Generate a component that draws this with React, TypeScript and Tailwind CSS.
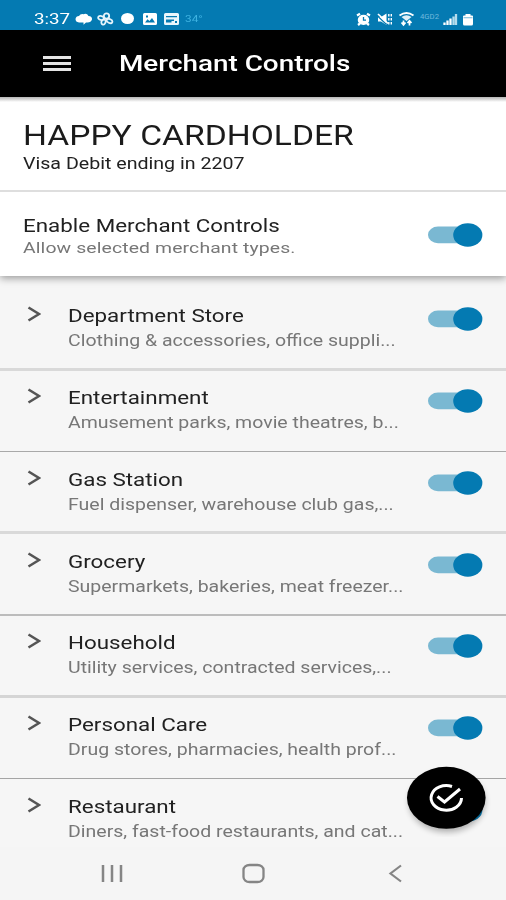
import React from "react";

const rows = [
  { name: "Department Store", detail: "Clothing & accessories, office suppli...", line: "border-b-[3px] border-[#d9d9d9] h-[95px] pt-[27px]" },
  { name: "Entertainment", detail: "Amusement parks, movie theatres, b...", line: "border-b border-[#a9a9a9] h-[81px] pt-[14px]" },
  { name: "Gas Station", detail: "Fuel dispenser, warehouse club gas,...", line: "border-b-[3px] border-[#d9d9d9] h-[82px] pt-[15px]" },
  { name: "Grocery", detail: "Supermarkets, bakeries, meat freezer...", line: "border-b-2 border-[#bcbcbc] h-[82px] pt-[15px]" },
  { name: "Household", detail: "Utility services, contracted services,...", line: "border-b-[3px] border-[#d5d5d5] h-[82px] pt-[14px]" },
  { name: "Personal Care", detail: "Drug stores, pharmacies, health prof...", line: "border-b border-[#a5a5a5] h-[81px] pt-[14px]" },
  { name: "Restaurant", detail: "Diners, fast-food restaurants, and cat...", line: "h-[68px] pt-[15px]" },
];

function Wide({ className, children }: { className: string; children: React.ReactNode }) {
  return <div className={"w-max origin-left scale-x-[1.25] whitespace-nowrap " + className}>{children}</div>;
}

function Toggle() {
  return (
    <svg className="h-6 w-[56px] shrink-0" viewBox="0 0 56 24" aria-hidden="true">
      <rect x="1" y="3.6" width="46" height="16.6" rx="10" ry="8.3" fill="#7ab8d2" />
      <ellipse cx="40.8" cy="12" rx="14.6" ry="11.8" fill="#047ab2" />
    </svg>
  );
}

function StatusIcons() {
  return (
    <div className="flex items-center text-white">
      <svg className="h-[14px] w-[18px]" viewBox="0 0 18 14">
        <path d="M4 4Q5.500 1.500 8.500 2.200Q12 1 13.500 4Q17.300 4.300 17 7.500Q16 10.500 12.500 10.500H11L8.500 12.800V10.500H4Q.500 10 .500 7Q1 4 4 4Z" fill="#fff" />
      </svg>
      <svg className="ml-[4px] h-[14px] w-[17px]" viewBox="0 0 17 14" fill="none" stroke="#e6f4fb" strokeWidth="1.8">
        <ellipse cx="9.500" cy="4" rx="2.700" ry="2.700" />
        <ellipse cx="4" cy="6" rx="2.900" ry="2" transform="rotate(12 4 6)" />
        <ellipse cx="6.500" cy="10" rx="2" ry="2.600" transform="rotate(25 6.500 10)" />
        <ellipse cx="12.500" cy="9" rx="3" ry="1.900" transform="rotate(25 12.500 9)" />
      </svg>
      <div className="ml-[7px] h-[11px] w-[13px] rounded-[50%] bg-white" />
      <svg className="ml-[9px] h-[12px] w-[14px]" viewBox="0 0 14 12">
        <path fillRule="evenodd" d="M1.500 0H12.500Q14 0 14 1.500V10.500Q14 12 12.500 12H1.500Q0 12 0 10.500V1.500Q0 0 1.500 0ZM2 9.500H12L9 5L6.500 8L4.500 6.300ZM3 2.500V4.500H5V2.500Z" fill="#fff" />
      </svg>
      <svg className="ml-[7px] h-[12px] w-[15px]" viewBox="0 0 15 12">
        <path fillRule="evenodd" d="M1.500 0H13.500Q15 0 15 1.500V10.500Q15 12 13.500 12H1.500Q0 12 0 10.500V1.500Q0 0 1.500 0ZM2 3V4.300H13V3ZM2 6.500V9.500H7.500V8H10V6.500ZM11 8V10H13V8Z" fill="#e9f6fc" />
      </svg>
    </div>
  );
}

function SystemIcons() {
  return (
    <svg className="ml-auto h-[18px] w-[122px]" viewBox="0 0 122 18" fill="none" stroke="#fff">
      <ellipse cx="9.500" cy="9.900" rx="5" ry="4.300" fill="#fff" strokeWidth="1.500" />
      <path d="M3 5.500L6 3.700M13 3.700L16 5.500M4 15L6 13.500M15 15L13 13.500" strokeWidth="2.200" />
      <path d="M9.500 7V10.200H12" stroke="#047ab2" strokeWidth="1.300" />
      <path d="M24 7H27L32.500 3.500V15L27 11.500H24Z" fill="#fff" stroke="none" />
      <path d="M23 5.500L32.500 14.500" stroke="#047ab2" strokeWidth="1.200" />
      <path d="M24 4L34 13.500" strokeWidth="1.700" />
      <path d="M34.800 4V14.500M37.300 4V14.500" strokeWidth="1.400" strokeDasharray="2.500 1.500" />
      <path d="M45.500 5.500Q52.500 .500 59.500 5.500" strokeWidth="1.800" />
      <path d="M47.500 7Q52.500 3.500 57.500 7L52.500 11Z" fill="#dff0f8" stroke="none" />
      <path d="M47.500 12.500L49.500 15L51.500 12.500M53.500 13L55.500 10.800L57.500 13M49.500 10.500V14.500M55.500 11.500V15.500" strokeWidth="1.700" />
      <text x="66" y="9" fontFamily="Roboto, sans-serif" fontSize="7.500" textLength="19" lengthAdjust="spacingAndGlyphs" fill="#71b9dc" stroke="none">4GD2</text>
      <path d="M90.500 15V12.500M93.500 15V10.500M96.500 15V8.500" strokeWidth="2.300" stroke="#fff" />
      <path d="M99.500 15V6.500M102 15V4" strokeWidth="2.300" stroke="#b5dced" />
      <path d="M111.500 4H116.500V5.500H118Q119 5.500 119 6.500V14Q119 15.500 117.500 15.500H110.500Q109 15.500 109 14V6.500Q109 5.500 110 5.500H111.500Z" fill="#fff" stroke="none" />
      <path d="M109.500 7.700H118.500" stroke="#89c4df" strokeWidth="1.200" />
    </svg>
  );
}

export default function App() {
  return (
    <div className="flex h-[900px] w-[506px] flex-col overflow-hidden bg-[#f6f6f6] font-['Roboto',sans-serif] text-[#212121]">
      <header className="flex h-[30px] shrink-0 items-center bg-[#047ab2] pl-[34px] pr-[30px] pt-[7px]">
        <div className="w-[41px]">
          <Wide className="text-[15px] leading-[18px] text-white">3:37</Wide>
        </div>
        <StatusIcons />
        <Wide className="ml-[6px] text-[9.500px] leading-[12px] text-[#3fb3e2]">34°</Wide>
        <SystemIcons />
      </header>
      <nav className="flex h-[67px] shrink-0 items-center bg-black pl-[43px]">
        <div className="flex h-[15px] w-[28px] flex-col justify-between">
          <div className="h-[3px] bg-[#e5e5e5]" />
          <div className="h-[3px] bg-[#e5e5e5]" />
          <div className="h-[3px] bg-[#e5e5e5]" />
        </div>
        <Wide className="mb-[2px] ml-[48px] text-[22.300px] font-medium leading-[26px] text-white">Merchant Controls</Wide>
      </nav>
      <section className="z-10 shrink-0 bg-white shadow-[0_2px_8px_rgba(0,0,0,0.4)]">
        <div className="h-[95px] border-b-2 border-[#dedede] bg-linear-to-b from-[#b5b5b5] to-white to-[5px] pl-[23px] pt-[23px]">
          <Wide className="text-[26.900px] leading-[32px] text-[#1b1b1b]">HAPPY CARDHOLDER</Wide>
          <Wide className="mt-[2px] text-[15.700px] leading-[20px]">Visa Debit ending in 2207</Wide>
        </div>
        <div className="flex h-[84px] justify-between pl-[23px] pr-[23px]">
          <div className="pt-[22px]">
            <Wide className="text-[17.900px] leading-[24px]">Enable Merchant Controls</Wide>
            <Wide className="text-[15.500px] leading-[20px] tracking-[0.1px] text-[#777]">Allow selected merchant types.</Wide>
          </div>
          <div className="pt-[31px]"><Toggle /></div>
        </div>
      </section>
      <main className="shrink-0">
        {rows.map((r) => (
          <div key={r.name} className={"flex justify-between pl-[27px] pr-[23px] " + r.line}>
            <div className="flex">
              <svg className="mt-[3px] h-4 w-[14px]" viewBox="0 0 14 16" fill="none" stroke="#555" strokeWidth="2.600">
                <path d="M1.500 1.500L12 8L1.500 14.500" />
              </svg>
              <div className="ml-[27px]">
                <Wide className="text-[17.900px] leading-[26px]">{r.name}</Wide>
                <Wide className="text-[15.600px] leading-[25px] text-[#777]">{r.detail}</Wide>
              </div>
            </div>
            <div className="pt-[4px]"><Toggle /></div>
          </div>
        ))}
      </main>
      <footer className="relative flex flex-1 items-start bg-[#f5f5f5]">
        <svg className="absolute bottom-[63px] right-[12px] h-[82px] w-[94px]" viewBox="0 0 94 82">
          <defs>
            <filter id="soft" x="-20%" y="-20%" width="140%" height="150%"><feGaussianBlur stdDeviation="3" /></filter>
          </defs>
          <ellipse cx="47" cy="47" rx="38" ry="30" fill="#000" opacity=".3" filter="url(#soft)" />
          <ellipse cx="46.300" cy="42.800" rx="39.300" ry="31" fill="#000" />
          <path d="M52 31.500A15.200 12.300 0 1 0 61.500 43" fill="none" stroke="#fff" strokeWidth="3" />
          <path d="M37.500 41.500L44.500 47L60 34" fill="none" stroke="#fff" strokeWidth="3" />
        </svg>
        <svg className="h-[52px] w-full" viewBox="0 0 506 52" fill="none" stroke="#858585">
          <path d="M103 18V35M112 18V35M121 18V35" strokeWidth="2.500" />
          <rect x="243.500" y="18" width="20" height="17" rx="6" ry="5" strokeWidth="2.300" />
          <path d="M401 18.500L390.500 26.500L401 34.500" strokeWidth="2.200" />
        </svg>
      </footer>
    </div>
  );
}
